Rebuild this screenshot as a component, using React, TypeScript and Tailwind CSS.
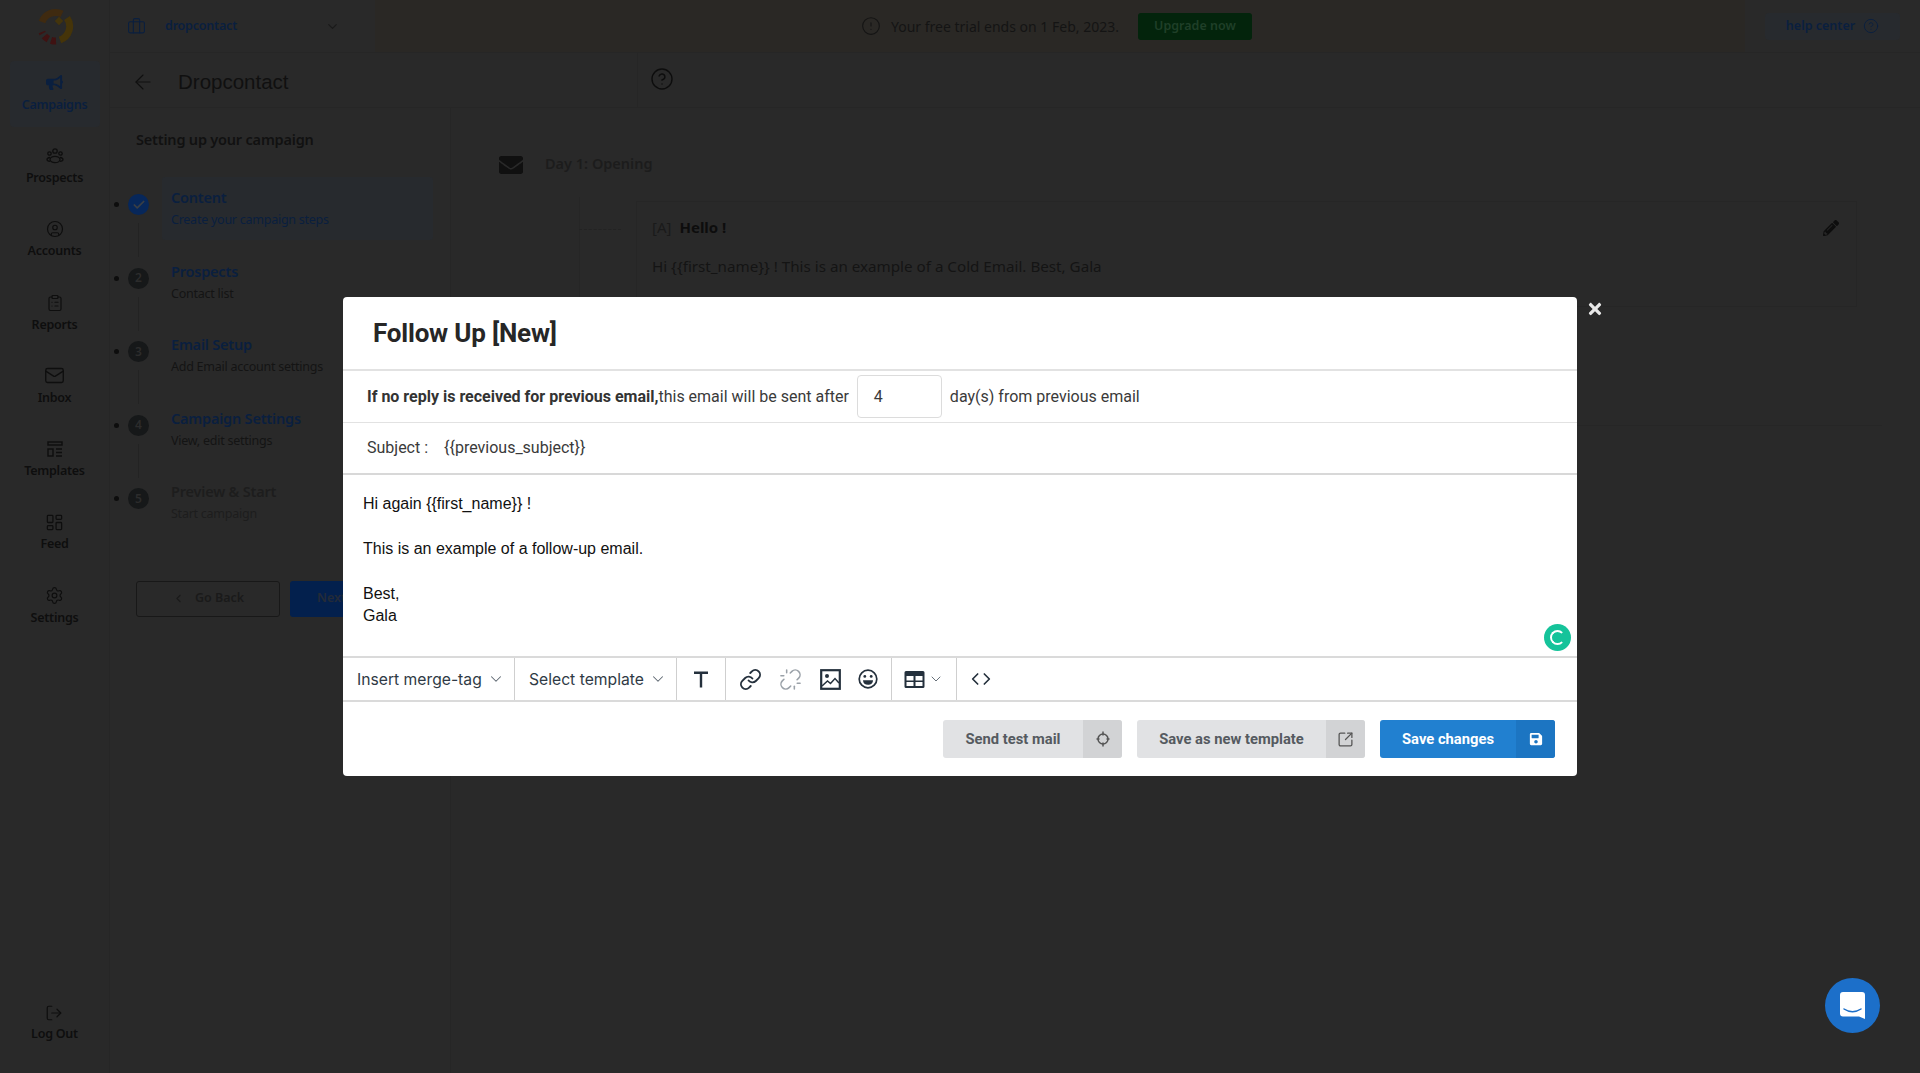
import {
  ArrowLeft,
  Briefcase,
  Check,
  ChevronDown,
  ChevronLeft,
  CircleAlert,
  CircleHelp,
  CircleUser,
  ClipboardList,
  Code,
  LayoutDashboard,
  Link,
  LogOut,
  Mail,
  Settings,
  SquareArrowOutUpRight,
  Unlink,
} from "lucide-react";
import { FaBullhorn, FaEnvelope, FaPencilAlt, FaSave, FaTimes } from "react-icons/fa";

const navItems = [
  { label: "Prospects", icon: <ProspectsIcon /> },
  { label: "Accounts", icon: <CircleUser size={18} strokeWidth={1.6} /> },
  { label: "Reports", icon: <ClipboardList size={18} strokeWidth={1.6} /> },
  { label: "Inbox", icon: <Mail size={21} strokeWidth={1.5} /> },
  { label: "Templates", icon: <TemplatesIcon /> },
  { label: "Feed", icon: <LayoutDashboard size={19} strokeWidth={1.6} /> },
  { label: "Settings", icon: <Settings size={19} strokeWidth={1.5} /> },
];

const steps = [
  { n: "2", title: "Prospects", sub: "Contact list" },
  { n: "3", title: "Email Setup", sub: "Add Email account settings" },
  { n: "4", title: "Campaign Settings", sub: "View, edit settings" },
];

function ProspectsIcon() {
  return (
    <svg width="18" height="16" viewBox="0 0 18 16" fill="none" stroke="currentColor" strokeWidth="1.3">
      <circle cx="9" cy="3" r="2.2" />
      <circle cx="3.5" cy="5.5" r="1.7" />
      <circle cx="14.5" cy="5.5" r="1.7" />
      <ellipse cx="9" cy="11.5" rx="5" ry="3.2" />
      <path d="M4 9.5C2 9.8 1 10.6 1 11.5s1 1.6 3 1.9M14 9.5c2 .3 3 1.1 3 2s-1 1.6-3 1.9" />
    </svg>
  );
}

function TemplatesIcon() {
  return (
    <svg width="18" height="18" viewBox="0 0 18 18" fill="none" stroke="currentColor" strokeWidth="1.4">
      <rect x="2" y="2" width="14" height="3" />
      <rect x="2" y="9" width="5" height="7" />
      <path d="M10 9h6M10 12.5h6M10 16h6" />
    </svg>
  );
}

function Logo() {
  return (
    <svg width="38" height="38" viewBox="0 0 38 38" fill="none" strokeWidth="7">
      <path d="M6 14A14.5 14.5 0 0 1 26 6" stroke="#3f2a10" />
      <path d="M31 10A14.5 14.5 0 0 1 24 32" stroke="#453409" />
      <path d="M20 33A14.5 14.5 0 0 1 6 24" stroke="#3f1212" strokeDasharray="5 3" />
      <rect x="20" y="10" width="6" height="6" transform="rotate(45 23 13)" fill="#43340c" stroke="none" />
    </svg>
  );
}

function TableIcon() {
  return (
    <svg width="21" height="19" viewBox="0 0 21 19" fill="none">
      <path
        fillRule="evenodd"
        clipRule="evenodd"
        d="M2 1h17a1.5 1.5 0 0 1 1.5 1.5v14A1.5 1.5 0 0 1 19 18H2a1.5 1.5 0 0 1-1.5-1.5v-14A1.5 1.5 0 0 1 2 1zM2.5 6v4.5h7V6zM11.5 6v4.5h7V6zM2.5 12v4h7v-4zM11.5 12v4h7v-4z"
        fill="#24303c"
      />
    </svg>
  );
}

function TextIcon() {
  return (
    <svg width="16" height="17" viewBox="0 0 16 17" fill="#24303c">
      <path d="M1 0.5h14v2.4H9.2v13.6H6.8V2.9H1z" />
    </svg>
  );
}

function ImageIcon() {
  return (
    <svg width="21" height="21" viewBox="0 0 21 21" fill="none">
      <rect x="1.2" y="1.2" width="18.6" height="18.6" stroke="#24303c" strokeWidth="2.2" />
      <circle cx="7" cy="7" r="2" fill="#24303c" />
      <path d="M2 17l5.5-5 3 2.5L15 9.5l4 4.5" stroke="#24303c" strokeWidth="1.5" />
    </svg>
  );
}

function SmileIcon() {
  return (
    <svg width="20" height="20" viewBox="0 0 20 20" fill="none">
      <circle cx="10" cy="10" r="8.8" stroke="#24303c" strokeWidth="1.7" />
      <circle cx="6.8" cy="7.4" r="1.4" fill="#24303c" />
      <circle cx="13.2" cy="7.4" r="1.4" fill="#24303c" />
      <path d="M5 11.2h10c0 3-2.2 4.6-5 4.6s-5-1.6-5-4.6z" fill="#24303c" />
    </svg>
  );
}

function TargetIcon() {
  return (
    <svg width="14" height="16" viewBox="0 0 14 16" fill="none" stroke="#555" strokeWidth="1.5">
      <circle cx="7" cy="8" r="5" />
      <path d="M7 0.5v4M7 11.5v4M0.5 8h3M10.5 8h3" />
    </svg>
  );
}

function ToolbarSelect({ label, width }: { label: string; width: string }) {
  return (
    <div className={`flex items-center justify-between pl-[14px] pr-[9px] border-r border-[#cfcfcf] h-full ${width}`}>
      <span className="pt-[1px] font-['Inter',sans-serif] text-[15.7px] text-[#2f3a45]">{label}</span>
      <ChevronDown size={18} strokeWidth={1.4} className="text-[#5c6670]" />
    </div>
  );
}

function FooterButton({
  label,
  icon,
  outer,
  iconBox,
  text,
}: {
  label: string;
  icon: React.ReactNode;
  outer: string;
  iconBox: string;
  text: string;
}) {
  return (
    <div className={`flex h-[38px] rounded-[3px] overflow-hidden ${outer}`}>
      <div className={`flex-1 flex items-center justify-center font-['Roboto',sans-serif] font-bold text-[14.75px] ${text}`}>
        {label}
      </div>
      <div className={`w-[39px] flex items-center justify-center ${iconBox}`}>{icon}</div>
    </div>
  );
}

function Modal() {
  return (
    <div className="absolute left-[343px] top-[297px] w-[1234px] bg-white rounded-[4px] font-['Roboto',sans-serif]">
      <div className="h-[74px] border-b-2 border-[#e2e2e2] pl-[30px] flex items-center">
        <h2 className="text-[26px] font-bold text-[#262626] tracking-[-0.2px]">Follow Up [New]</h2>
      </div>
      <div className="h-[52px] border-b border-[#e2e2e2] pl-[24px] flex items-center text-[16px] text-[#3a3a3a]">
        <b className="font-bold text-[#333]">If no reply is received for previous email,</b>
        <span>this email will be sent after</span>
        <div className="ml-[8px] w-[85px] h-[43px] border border-[#dcdcdc] rounded-[4px] flex items-center pl-[16px]">
          4
        </div>
        <span className="ml-[8px]">day(s) from previous email</span>
      </div>
      <div className="h-[52px] border-b-2 border-[#d8d8d8] pl-[24px] flex items-center text-[16px] text-[#3a3a3a]">
        <span>Subject :</span>
        <span className="ml-[16px]">{"{{previous_subject}}"}</span>
      </div>
      <div className="relative h-[181px] pl-[20px] pt-[18px] font-['Liberation_Sans',sans-serif] text-[16px] leading-[22.4px] text-[#111]">
        <p>{"Hi again {{first_name}} !"}</p>
        <p className="mt-[22.4px]">This is an example of a follow-up email.</p>
        <p className="mt-[22.4px]">Best,</p>
        <p>Gala</p>
        <div className="absolute right-[6px] bottom-[5px] w-[27px] h-[27px] rounded-full bg-[#15c39a] flex items-center justify-center">
          <div className="w-[15px] h-[15px] rounded-full border-2 border-white border-r-transparent" />
        </div>
      </div>
      <div className="h-[46px] border-y-2 border-[#dadada] flex items-center">
        <ToolbarSelect label="Insert merge-tag" width="w-[172px]" />
        <ToolbarSelect label="Select template" width="w-[162px]" />
        <div className="w-[49px] h-full border-r border-[#cfcfcf] flex items-center justify-center">
          <TextIcon />
        </div>
        <div className="w-[166px] h-full border-r border-[#cfcfcf] flex items-center justify-around px-[4px]">
          <Link size={23} strokeWidth={2} className="text-[#24303c]" />
          <Unlink size={23} strokeWidth={1.6} className="text-[#9aa1a8]" />
          <ImageIcon />
          <SmileIcon />
        </div>
        <div className="w-[65px] h-full border-r border-[#cfcfcf] flex items-center justify-center gap-[3px]">
          <TableIcon />
          <ChevronDown size={16} strokeWidth={1.4} className="text-[#5c6670]" />
        </div>
        <div className="w-[48px] h-full flex items-center justify-center">
          <Code size={20} strokeWidth={2} className="text-[#24303c]" />
        </div>
      </div>
      <div className="h-[74px] flex items-center justify-end pr-[22px] gap-[15px]">
        <FooterButton
          label="Send test mail"
          icon={<TargetIcon />}
          outer="w-[179px] bg-[#e1e2e4]"
          iconBox="bg-[#d2d3d5]"
          text="text-[#555a60]"
        />
        <FooterButton
          label="Save as new template"
          icon={<SquareArrowOutUpRight size={17} strokeWidth={1.8} className="text-[#555]" />}
          outer="w-[228px] bg-[#e1e2e4]"
          iconBox="bg-[#d2d3d5]"
          text="text-[#555a60]"
        />
        <FooterButton
          label="Save changes"
          icon={<FaSave size={14} className="text-white" />}
          outer="w-[175px] bg-[#2180d0]"
          iconBox="bg-[#1c75c2]"
          text="text-white"
        />
      </div>
    </div>
  );
}

function Sidebar() {
  return (
    <aside className="w-[110px] shrink-0 border-r border-[#262626] flex flex-col items-center text-[#0e0e0e]">
      <div className="h-[53px] flex items-center justify-center">
        <Logo />
      </div>
      <div className="mt-[8px] w-[90px] h-[66px] rounded-[4px] bg-[#272a2e] flex flex-col items-center justify-center text-[#0a1f3f]">
        <FaBullhorn size={17} />
        <span className="text-[12.5px] tracking-[-0.25px] font-semibold mt-[5px]">Campaigns</span>
      </div>
      <div className="mt-[14px] flex flex-col">
        {navItems.map((item) => (
          <div key={item.label} className="h-[73.3px] w-[110px] flex flex-col items-center pt-[4px]">
            <div className="h-[22px] flex items-center">{item.icon}</div>
            <span className="text-[12.5px] tracking-[-0.25px] font-semibold mt-[2px]">{item.label}</span>
          </div>
        ))}
      </div>
      <div className="mt-auto mb-[29px] flex flex-col items-center">
        <LogOut size={18} strokeWidth={1.6} />
        <span className="text-[12.5px] tracking-[-0.25px] font-semibold mt-[3px]">Log Out</span>
      </div>
    </aside>
  );
}

function StepBadge({ n }: { n: string }) {
  return (
    <div className="relative w-[21px] h-[21px] rounded-full bg-[#161819] flex items-center justify-center text-[12px] font-semibold text-[#2c2c2c]">
      <span className="absolute left-[-14px] top-[8px] w-[5px] h-[5px] rounded-full bg-[#0d0d0d]" />
      {n}
    </div>
  );
}

function StepsPanel() {
  return (
    <div className="w-[341px] shrink-0 border-r border-[#262626] pl-[18px] pt-[20px]">
      <h3 className="ml-[8px] text-[14.5px] tracking-[-0.2px] font-semibold text-[#111] leading-[22px]">
        Setting up your campaign
      </h3>
      <div className="mt-[27px] flex flex-col">
        <div className="flex h-[73.5px] items-start">
          <div className="mt-[17px] relative w-[21px] h-[21px] rounded-full bg-[#07275a] flex items-center justify-center">
            <span className="absolute left-[-14px] top-[8px] w-[5px] h-[5px] rounded-full bg-[#0d0d0d]" />
            <Check size={14} strokeWidth={3} className="text-[#3a3f45]" />
            <span className="absolute left-[10px] top-[29px] h-[34px] border-l border-[#232323]" />
          </div>
          <div className="ml-[13px] w-[271px] h-[63px] bg-[#272a2e] rounded-[3px] pl-[9px] pt-[9px]">
            <div className="text-[14.5px] tracking-[-0.2px] font-semibold text-[#0a1f3f] leading-[22px]">Content</div>
            <div className="mt-[2px] text-[12.5px] tracking-[-0.25px] text-[#0a1f3f] leading-[20px]">
              Create your campaign steps
            </div>
          </div>
        </div>
        {steps.map((s) => (
          <div key={s.n} className="flex h-[73.5px] items-start">
            <div className="mt-[17px] relative">
              <StepBadge n={s.n} />
              <span className="absolute left-[10px] top-[29px] h-[34px] border-l border-[#232323]" />
            </div>
            <div className="ml-[13px] pl-[9px] pt-[9px]">
              <div className="text-[14.5px] tracking-[-0.2px] font-semibold text-[#0a1f3f] leading-[22px]">{s.title}</div>
              <div className="mt-[2px] text-[12.5px] tracking-[-0.25px] text-[#141414] leading-[20px]">{s.sub}</div>
            </div>
          </div>
        ))}
        <div className="flex h-[73.5px] items-start">
          <div className="mt-[17px]">
            <StepBadge n="5" />
          </div>
          <div className="ml-[13px] pl-[9px] pt-[9px]">
            <div className="text-[14.5px] tracking-[-0.2px] font-semibold text-[#1d1d1d] leading-[22px]">
              {"Preview & Start"}
            </div>
            <div className="mt-[2px] text-[12.5px] tracking-[-0.25px] text-[#1d1d1d] leading-[20px]">Start campaign</div>
          </div>
        </div>
      </div>
      <div className="ml-[8px] mt-[36px] flex gap-[10px] text-[12.5px] font-semibold">
        <div className="w-[144px] h-[36px] border border-[#181818] rounded-[3px] flex items-center justify-center gap-[10px] text-[#1a1a1a]">
          <ChevronLeft size={13} />
          Go Back
        </div>
        <div className="w-[144px] h-[36px] bg-[#03204d] rounded-[3px] flex items-center pl-[27px] text-[#232b38]">
          Next
        </div>
      </div>
    </div>
  );
}

export default function App() {
  return (
    <div className="relative w-full h-[1073px] overflow-hidden bg-[#292929] font-['Noto_Sans',sans-serif]">
      <div className="flex h-full">
        <Sidebar />
        <div className="flex-1 flex flex-col min-w-0">
          <div className="h-[53px] shrink-0 border-b border-[#262626] flex items-center">
            <div className="w-[265px] shrink-0 pl-[17px] pt-[1px] flex items-center text-[#0a1f3f]">
              <Briefcase size={19} strokeWidth={1.4} />
              <span className="ml-[19px] text-[12.5px] tracking-[-0.2px] font-semibold">dropcontact</span>
              <ChevronDown size={15} className="ml-[88px] text-[#1a1a1a]" />
            </div>
            <div className="w-[1370px] h-full bg-[#2a2825] flex items-center pl-[486px] text-[#141414]">
              <CircleAlert size={20} strokeWidth={1.3} />
              <span className="ml-[10px] text-[14px]">Your free trial ends on 1 Feb, 2023.</span>
              <div className="ml-[19px] w-[114px] h-[27px] rounded-[3px] bg-[#03240c] flex items-center justify-center text-[12.5px] font-semibold text-[#1f3f28]">
                Upgrade now
              </div>
            </div>
            <div className="ml-[20px] w-[135px] h-[27px] rounded-[4px] bg-[#272a2e] flex items-center justify-center gap-[8px] text-[#0a1f3f] text-[12.5px] font-semibold">
              help center
              <CircleHelp size={16} strokeWidth={1.4} />
            </div>
          </div>
          <div className="h-[55px] shrink-0 border-b border-[#262626] flex items-center">
            <div className="w-[528px] h-full border-r border-[#262626] pl-[21px] pt-[4px] flex items-center text-[#101010]">
              <ArrowLeft size={24} strokeWidth={1.1} />
              <span className="ml-[23px] font-['Liberation_Sans',sans-serif] text-[20.5px]">Dropcontact</span>
            </div>
            <CircleHelp size={24} strokeWidth={1.4} className="ml-[12px] -mt-[2px] text-[#0d0d0d]" />
          </div>
          <div className="flex-1 flex min-h-0">
            <StepsPanel />
            <div className="flex-1 pl-[48px] pt-[45px]">
              <div className="flex items-center text-[#101010]">
                <FaEnvelope size={24} />
                <span className="ml-[22px] mb-[3px] text-[14.5px] font-semibold text-[#1c1c1c]">Day 1: Opening</span>
              </div>
              <div className="relative ml-[137px] mt-[23px] mr-[63px] h-[106px] border border-[#262626] pl-[15px] pt-[14px]">
                <span className="absolute left-[-58px] top-[-5px] h-[120px] border-l border-[#262626]" />
                <span className="absolute left-[-58px] top-[27px] w-[42px] border-t border-dashed border-[#232323]" />
                <div className="flex items-center text-[15px]">
                  <span className="text-[#1a1a1a]">[A]</span>
                  <span className="ml-[8px] font-bold text-[#0d0d0d]">Hello !</span>
                </div>
                <FaPencilAlt size={16} className="absolute right-[17px] top-[18px] text-[#0d0d0d]" />
                <p className="mt-[17px] text-[15.2px] text-[#141414]">
                  {"Hi {{first_name}} ! This is an example of a Cold Email. Best, Gala"}
                </p>
              </div>
              <div className="mt-[118px] mr-[38px] border-t border-[#262626]" />
            </div>
          </div>
        </div>
      </div>

      <Modal />
      <FaTimes size={18} className="absolute left-[1586px] top-[300px] text-[#e8e8e8]" />
      <div className="absolute left-[1825px] top-[978px] w-[55px] h-[55px] rounded-full bg-[#1c6fc9] flex items-center justify-center">
        <svg width="25" height="27" viewBox="0 0 25 27">
          <path d="M3 0h19a3 3 0 0 1 3 3v24l-6-2.5H3a3 3 0 0 1-3-3V3a3 3 0 0 1 3-3z" fill="#fff" />
          <path d="M4 17c5 3.5 12 3.5 17 0" stroke="#1c6fc9" strokeWidth="1.5" fill="none" strokeLinecap="round" />
        </svg>
      </div>
    </div>
  );
}
